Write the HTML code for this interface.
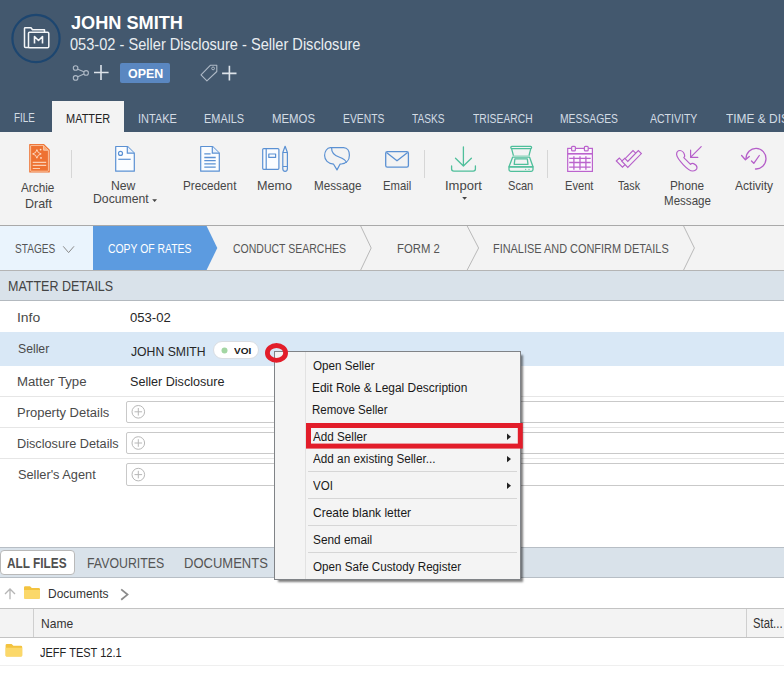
<!DOCTYPE html>
<html><head><meta charset="utf-8">
<style>
*{box-sizing:border-box;margin:0;padding:0}
html,body{width:784px;height:698px;overflow:hidden;background:#fff;font-family:"Liberation Sans",sans-serif;color:#333;position:relative}
.t{position:absolute;line-height:1;white-space:nowrap;transform-origin:0 0}
.b{position:absolute}
svg{position:absolute;left:0;top:0;overflow:visible}
</style></head><body>
<!-- header -->
<div class="b" style="left:0;top:0;width:784px;height:132px;background:#43586e"></div>
<div class="b" style="left:52px;top:101px;width:72px;height:31px;background:#f3f3f3"></div>
<div class="b" style="left:120px;top:63px;width:50px;height:20px;background:#5a87c1;border-radius:2px"></div>
<!-- ribbon -->
<div class="b" style="left:0;top:132px;width:784px;height:93px;background:#f3f3f3"></div>
<div class="b" style="left:0;top:225px;width:784px;height:1px;background:#a9a9a9"></div>
<div class="b" style="left:71px;top:150px;width:1px;height:28px;background:#d6d6d6"></div>
<div class="b" style="left:424px;top:150px;width:1px;height:28px;background:#d6d6d6"></div>
<div class="b" style="left:547px;top:150px;width:1px;height:28px;background:#d6d6d6"></div>
<!-- stages -->
<div class="b" style="left:0;top:226px;width:784px;height:44px;background:#f3f3f3"></div>
<div class="b" style="left:0;top:226px;width:93px;height:44px;background:#eaf4fd"></div>
<div class="b" style="left:0;top:270px;width:784px;height:1px;background:#b4b4b4"></div>
<!-- matter details -->
<div class="b" style="left:0;top:271px;width:784px;height:29px;background:#d9e2ea"></div>
<div class="b" style="left:0;top:300px;width:784px;height:1px;background:#b3b9bf"></div>
<div class="b" style="left:0;top:332px;width:784px;height:34px;background:#d9e8f6"></div>
<div class="b" style="left:0;top:396px;width:784px;height:1px;background:#e6e6e6"></div>
<div class="b" style="left:0;top:427px;width:784px;height:1px;background:#e6e6e6"></div>
<div class="b" style="left:0;top:458px;width:784px;height:1px;background:#e6e6e6"></div>
<div class="b" style="left:126px;top:401px;width:700px;height:22px;border:1px solid #c9c9c9;border-radius:2px;background:#fff"></div>
<div class="b" style="left:126px;top:432px;width:700px;height:22px;border:1px solid #c9c9c9;border-radius:2px;background:#fff"></div>
<div class="b" style="left:126px;top:463px;width:700px;height:23px;border:1px solid #c9c9c9;border-radius:2px;background:#fff"></div>
<div class="b" style="left:213px;top:341px;width:46px;height:18px;border:1px solid #d9dde2;border-radius:9px;background:#fff"></div>
<!-- bottom -->
<div class="b" style="left:0;top:547px;width:784px;height:31px;background:#d9e2ea;border-top:1px solid #b7bec5;border-bottom:1px solid #b7bec5"></div>
<div class="b" style="left:0;top:550px;width:75px;height:25px;background:#fff;border:1px solid #b9b9b9;border-radius:4px"></div>
<div class="b" style="left:0;top:608px;width:784px;height:30px;background:#f3f3f3;border-top:1px solid #c3c3c3;border-bottom:1px solid #c3c3c3"></div>
<div class="b" style="left:33px;top:609px;width:1px;height:28px;background:#cfcfcf"></div>
<div class="b" style="left:746px;top:609px;width:1px;height:28px;background:#cfcfcf"></div>
<div class="b" style="left:0;top:665px;width:784px;height:1px;background:#efefef"></div>

<svg width="784" height="698" viewBox="0 0 784 698">
  <!-- logo -->
  <circle cx="36" cy="38.5" r="23.6" fill="none" stroke="#1d4670" stroke-width="2.2"/>
  <g fill="none" stroke="#f4f6f8" stroke-width="1.5" stroke-linejoin="round">
    <path d="M29,47.5 H25.5 Q24.5,47.5 24.5,46.5 V28.5 Q24.5,27.8 25.3,27.8 H31 L32.5,29.8 H44.5 V32"/>
    <path d="M29.5,32.3 H47.5 Q48.8,32.3 48.8,33.5 V46.5 Q48.8,47.8 47.5,47.8 H29.5 Q28.5,47.8 28.5,46.5 V33.3 Q28.5,32.3 29.5,32.3 Z"/>
    <path d="M34.5,43.5 V36.5 L38.5,40.5 L42.5,36.5 V43.5" stroke-width="1.6"/>
  </g>
  <!-- share -->
  <g fill="none" stroke="#aeb9c6" stroke-width="1.1">
    <circle cx="75.6" cy="68" r="2.3"/><circle cx="75.6" cy="77.9" r="2.3"/><circle cx="86.1" cy="72.9" r="2.3"/>
    <path d="M77.8,69.2 L83.9,71.8 M77.8,76.8 L83.9,74"/>
  </g>
  <g stroke="#dde3ea" stroke-width="1.6">
    <path d="M101,65 V80 M94,72.5 H108.6"/>
    <path d="M229.4,65.8 V80.5 M222.1,73.4 H236.5"/>
  </g>
  <path d="M201,74.9 L210.3,65.3 H216.8 V71.5 L206.9,80.8 Z" fill="none" stroke="#aeb9c6" stroke-width="1.1" stroke-linejoin="round"/>
  <circle cx="213.1" cy="68.4" r="1.4" fill="none" stroke="#aeb9c6" stroke-width="1"/>

  <!-- Archie -->
  <path d="M29.2,144.6 Q29.2,144 29.8,144 H44 L49.8,149.8 V172 Q49.8,172.6 49.2,172.6 H29.8 Q29.2,172.6 29.2,172 Z" fill="#ee7232"/>
  <path d="M30.6,145.8 Q30.6,145.4 31,145.4 H43.4 L48.4,150.4 V170.8 Q48.4,171.2 48,171.2 H31 Q30.6,171.2 30.6,170.8 Z" fill="none" stroke="#fbc9a8" stroke-width="0.9"/>
  <path d="M43.6,145.6 V150.2 H48.2" fill="#f7a878" stroke="#fbd2b6" stroke-width="0.9"/>
  <path d="M36.9,149.6 Q37.5,153.3 41.2,153.9 Q37.5,154.5 36.9,158.2 Q36.3,154.5 32.6,153.9 Q36.3,153.3 36.9,149.6 Z" fill="none" stroke="#fde0cc" stroke-width="0.9"/>
  <circle cx="40.6" cy="149.6" r="0.9" fill="#fde0cc"/><circle cx="41" cy="157.9" r="0.9" fill="#fde0cc"/>
  <path d="M32.7,162.4 H46.2 M32.7,165.4 H46.2 M32.7,168.5 H40" stroke="#fbcfb3" stroke-width="1.2"/>
  <!-- New document -->
  <g fill="none" stroke="#5b91d3" stroke-width="1.2" stroke-linejoin="round">
    <path d="M115.7,146.5 H127.5 L134.3,153.2 V171.2 H115.7 Z" fill="#fbfdff"/>
    <path d="M127.3,146.5 V153.2 H134.3" fill="#eaf2fc"/>
    <circle cx="120.5" cy="153.4" r="2"/>
    <path d="M118.3,159.3 H130.7"/>
  </g>
  <!-- Precedent -->
  <g fill="none" stroke="#5b91d3" stroke-width="1.2" stroke-linejoin="round">
    <path d="M200.7,146.5 H212.5 L219.3,153.2 V171.2 H200.7 Z" fill="#fbfdff"/>
    <path d="M212.3,146.5 V153.2 H219.3" fill="#eaf2fc"/>
    <path d="M204.3,153.9 H210.6 M204.3,157.5 H215.7 M204.3,160.6 H215.7 M204.3,163.8 H215.7 M204.3,167.1 H215.7" stroke-width="1.3"/>
  </g>
  <!-- Memo -->
  <g fill="none" stroke="#5b91d3" stroke-width="1.2" stroke-linejoin="round">
    <rect x="262.7" y="148.6" width="16.2" height="20.7" rx="1" fill="#fbfdff"/>
    <path d="M266.2,148.6 V169.3"/>
    <rect x="268.8" y="154" width="6.8" height="3.4"/>
    <path d="M282.8,152.5 L285.1,146.3 L287.4,152.5 V168.8 Q287.4,171.3 285.1,171.3 Q282.8,171.3 282.8,168.8 Z M282.8,152.5 H287.4 M282.8,166.5 H287.4"/>
  </g>
  <!-- Message -->
  <g fill="none" stroke="#5b91d3" stroke-width="1.2" stroke-linejoin="round">
    <path d="M330.3,147.7 H343.6 C347.5,147.7 349.4,151.2 349.4,155.2 C349.4,159.8 346.4,163.4 341.4,164 L340,164.2 L337,169.9 L333.6,164.2 C328,163.6 324.6,160 324.6,155.6 C324.6,151.2 327.2,147.7 330.3,147.7 Z"/>
    <path d="M331.6,147.8 C331.4,152.5 334,155.3 339,157 C343.5,158.6 346,160.6 346.5,162.8"/>
  </g>
  <!-- Email -->
  <g fill="none" stroke="#5b91d3" stroke-width="1.3" stroke-linejoin="round">
    <rect x="385.7" y="151.6" width="22.7" height="15.6" rx="1.6"/>
    <path d="M386.5,152.4 L397,160.8 L407.6,152.4"/>
  </g>
  <!-- Import -->
  <g fill="none" stroke="#4fbf9b" stroke-width="1.3" stroke-linecap="round" stroke-linejoin="round">
    <path d="M463.4,147 V165.8 M455.5,158.3 L463.4,166 L471.4,158.3"/>
    <path d="M451.6,166 V169 Q451.6,171.1 453.8,171.1 H473.2 Q475.4,171.1 475.4,169 V166"/>
  </g>
  <!-- Scan -->
  <g fill="none" stroke="#4fbf9b" stroke-width="1.3" stroke-linejoin="round">
    <rect x="510.8" y="146.4" width="20.8" height="2.2" rx="1"/>
    <path d="M511.6,148.6 L513.5,155.8 M530.8,148.6 L528.9,155.8"/>
    <path d="M512.6,157.2 H529.6 L533,166.8 H509 Z"/>
    <path d="M514.9,158.8 H527.3 L528,164.3 H514.2 Z"/>
    <path d="M509,166.8 H533 V169.6 Q533,171.3 531.3,171.3 H510.7 Q509,171.3 509,169.6 Z"/>
  </g>
  <path d="M513.5,155.8 H528.9" stroke="#a9dcc9" stroke-width="1"/>
  <circle cx="525.7" cy="169.3" r="0.6" fill="#4fbf9b"/><circle cx="529" cy="169.3" r="0.6" fill="#4fbf9b"/>
  <!-- Event -->
  <g fill="none" stroke="#bb63cd" stroke-width="1.2">
    <rect x="567.7" y="148.4" width="24.7" height="23" fill="#fdf8fe"/>
    <path d="M567.7,153.8 H592.4" stroke-width="1.6"/>
    <rect x="571.6" y="146.3" width="3.8" height="4.6" rx="1" fill="#f3f3f3"/>
    <rect x="584.4" y="146.3" width="3.8" height="4.6" rx="1" fill="#f3f3f3"/>
    <path d="M569.2,158.3 H590.7 M569.2,162.5 H590.7 M569.2,167.1 H590.7 M573.9,156.2 V169.8 M580,156.2 V169.8 M585.9,156.2 V169.8" stroke-width="1.3"/>
  </g>
  <!-- Task -->
  <g fill="#f3f3f3" stroke="#b55ec9" stroke-width="1.1" stroke-linejoin="miter">
    <path d="M616.3,161 L619.3,158.1 L622.5,161.3 L633,150.5 L636,153.4 L622.5,167.2 Z"/>
    <path d="M621.8,161.2 L624.8,158.3 L627.8,161.4 L638.3,150.5 L641.4,153.6 L627.8,167.4 Z"/>
  </g>
  <!-- Phone -->
  <g fill="none" stroke="#b55ec9" stroke-width="1.2" stroke-linejoin="round" stroke-linecap="round">
    <path d="M680,150.5 C678,150.5 676.6,152.2 676.6,154.5 C676.8,157.2 679.4,160.5 683.4,164.8 C687.4,169 690.2,171 692.6,171 C695,171 697,169.4 697,167.8 C697,166 695.4,164.4 693.6,163.6 C692.2,163 691.2,163.6 690.5,164.3 L683.8,157.6 C684.6,156.8 685,156 684.6,155 C684,153 682,150.5 680,150.5 Z"/>
    <path d="M701.2,146.6 L691,156.8 M690.6,150.2 V157.4 H697.8"/>
  </g>
  <!-- Activity -->
  <g fill="none" stroke="#b55ec9" stroke-width="1.3" stroke-linejoin="round" stroke-linecap="round">
    <path d="M755.5,169 A10,10.3 0 1 0 746,158.6"/>
    <path d="M741.6,155.5 L745.4,159.8 L749.3,156.5"/>
    <path d="M751.5,161 L753.8,163.3 L759.3,155.5"/>
  </g>
  <!-- dropdown arrows -->
  <path d="M152.2,199.3 H157 L154.6,202 Z" fill="#444"/>
  <path d="M462.2,197 H467 L464.6,199.8 Z" fill="#444"/>

  <!-- stages -->
  <path d="M93,226 H206.6 L217.3,248 L206.6,270 H93 Z" fill="#5c9be0"/>
  <g fill="none" stroke="#b9b9b9" stroke-width="1">
    <path d="M360.7,226 L371.2,248 L360.7,270"/>
    <path d="M467.2,226 L478.6,248 L467.2,270"/>
    <path d="M683.6,226 L694.4,248 L683.6,270"/>
  </g>
  <path d="M63.2,246.3 L68.6,252.6 L74,246.3" fill="none" stroke="#8a8a8a" stroke-width="1"/>

  <!-- plus circles -->
  <g fill="none" stroke="#b8b8b8" stroke-width="1">
    <circle cx="138.3" cy="411.8" r="6.3"/><path d="M138.3,408 V415.6 M134.5,411.8 H142.1"/>
    <circle cx="138.3" cy="443" r="6.3"/><path d="M138.3,439.2 V446.8 M134.5,443 H142.1"/>
    <circle cx="138.3" cy="474.6" r="6.3"/><path d="M138.3,470.8 V478.4 M134.5,474.6 H142.1"/>
  </g>
  <circle cx="224.5" cy="350.6" r="3" fill="#a3d6a3"/>

  <!-- bottom icons -->
  <path d="M10,599.3 V589.5 M5,594 L10,589 L15,594" fill="none" stroke="#b5b5b5" stroke-width="1.3"/>
  <path d="M24,587.5 Q24,586.2 25.3,586.2 H30 L31.8,588 H38.7 Q40,588 40,589.3 V597.6 Q40,598.8 38.7,598.8 H25.3 Q24,598.8 24,597.6 Z" fill="#f3c33f"/>
  <path d="M24,590 H40 V597.6 Q40,598.8 38.7,598.8 H25.3 Q24,598.8 24,597.6 Z" fill="#fbd86a"/>
  <path d="M121.2,589.4 L127.5,594.6 L121.2,599.8" fill="none" stroke="#8b8b8b" stroke-width="1.8"/>
  <path d="M5.6,645.3 Q5.6,644 6.9,644 H11.6 L13.4,645.8 H20.9 Q22.2,645.8 22.2,647.1 V655.3 Q22.2,656.6 20.9,656.6 H6.9 Q5.6,656.6 5.6,655.3 Z" fill="#f3c33f"/>
  <path d="M5.6,647.8 H22.2 V655.3 Q22.2,656.6 20.9,656.6 H6.9 Q5.6,656.6 5.6,655.3 Z" fill="#fbd86a"/>
</svg>

<!-- menu -->
<div class="b" style="z-index:10;left:274px;top:351px;width:247px;height:229px;background:#f4f4f4;border:1px solid #808387;box-shadow:3px 3px 2px -1px rgba(0,0,0,0.5)"></div>
<div class="b" style="z-index:10;left:305px;top:352px;width:1px;height:227px;background:#e2e2e2"></div>
<div class="b" style="z-index:10;left:308px;top:471px;width:209px;height:1px;background:#d6d6d6"></div>
<div class="b" style="z-index:10;left:308px;top:498px;width:209px;height:1px;background:#d6d6d6"></div>
<div class="b" style="z-index:10;left:308px;top:525px;width:209px;height:1px;background:#d6d6d6"></div>
<div class="b" style="z-index:10;left:308px;top:552px;width:209px;height:1px;background:#d6d6d6"></div>
<svg width="784" height="698" viewBox="0 0 784 698" style="z-index:12">
  <path d="M507,433.6 L511,436.8 L507,440 Z" fill="#222"/>
  <path d="M507,455.9 L511,459.1 L507,462.3 Z" fill="#222"/>
  <path d="M507,482.5 L511,485.7 L507,488.9 Z" fill="#222"/>
  <rect x="308.5" y="425.5" width="211.8" height="20.6" fill="none" stroke="#e21d2a" stroke-width="5"/>
  <ellipse cx="276.5" cy="352.9" rx="9.1" ry="7.4" fill="none" stroke="#e21d2a" stroke-width="4.8"/>
</svg>
<div class="t" style="left:71.23px;top:15.00px;font-size:17.44px;transform:scaleX(1.0411);color:#ffffff;font-weight:bold;">JOHN SMITH</div>
<div class="t" style="left:70.42px;top:37.00px;font-size:15.99px;transform:scaleX(0.9134);color:#e9edf1;">053-02 - Seller Disclosure - Seller Disclosure</div>
<div class="t" style="left:127.60px;top:68.00px;font-size:12.79px;transform:scaleX(0.9697);color:#ffffff;font-weight:bold;">OPEN</div>
<div class="t" style="left:137.51px;top:113.00px;font-size:12.35px;transform:scaleX(0.8914);color:#d3dce5;">INTAKE</div>
<div class="t" style="left:203.72px;top:113.00px;font-size:12.35px;transform:scaleX(0.8872);color:#d3dce5;">EMAILS</div>
<div class="t" style="left:271.79px;top:113.00px;font-size:12.35px;transform:scaleX(0.9225);color:#d3dce5;">MEMOS</div>
<div class="t" style="left:342.77px;top:113.00px;font-size:12.35px;transform:scaleX(0.8376);color:#d3dce5;">EVENTS</div>
<div class="t" style="left:412.00px;top:113.00px;font-size:12.35px;transform:scaleX(0.8223);color:#d3dce5;">TASKS</div>
<div class="t" style="left:473.29px;top:113.00px;font-size:12.35px;transform:scaleX(0.8358);color:#d3dce5;">TRISEARCH</div>
<div class="t" style="left:560.37px;top:113.00px;font-size:12.35px;transform:scaleX(0.8367);color:#d3dce5;">MESSAGES</div>
<div class="t" style="left:650.30px;top:113.00px;font-size:12.35px;transform:scaleX(0.8528);color:#d3dce5;">ACTIVITY</div>
<div class="t" style="left:14.11px;top:112.00px;font-size:12.35px;transform:scaleX(0.7972);color:#d3dce5;">FILE</div>
<div class="t" style="left:65.92px;top:113.00px;font-size:12.35px;transform:scaleX(0.8881);color:#222222;">MATTER</div>
<div class="t" style="left:725.86px;top:113.00px;font-size:12.35px;transform:scaleX(0.9663);color:#d3dce5;">TIME &amp; DIS</div>
<div class="t" style="left:21.40px;top:182.00px;font-size:12.35px;transform:scaleX(0.9545);color:#464646;">Archie</div>
<div class="t" style="left:24.70px;top:198.00px;font-size:12.35px;transform:scaleX(1.0118);color:#464646;">Draft</div>
<div class="t" style="left:110.52px;top:180.00px;font-size:12.35px;transform:scaleX(0.9881);color:#464646;">New</div>
<div class="t" style="left:92.62px;top:193.00px;font-size:12.35px;transform:scaleX(0.9905);color:#464646;">Document</div>
<div class="t" style="left:182.66px;top:180.00px;font-size:12.35px;transform:scaleX(0.9488);color:#464646;">Precedent</div>
<div class="t" style="left:257.49px;top:180.00px;font-size:12.35px;transform:scaleX(1.0213);color:#464646;">Memo</div>
<div class="t" style="left:313.76px;top:180.00px;font-size:12.35px;transform:scaleX(0.9474);color:#464646;">Message</div>
<div class="t" style="left:382.70px;top:180.00px;font-size:12.35px;transform:scaleX(0.9142);color:#464646;">Email</div>
<div class="t" style="left:445.23px;top:180.00px;font-size:12.35px;transform:scaleX(1.0536);color:#464646;">Import</div>
<div class="t" style="left:507.90px;top:180.00px;font-size:12.35px;transform:scaleX(0.8989);color:#464646;">Scan</div>
<div class="t" style="left:564.91px;top:180.00px;font-size:12.35px;transform:scaleX(0.9012);color:#464646;">Event</div>
<div class="t" style="left:617.99px;top:180.00px;font-size:12.35px;transform:scaleX(0.8671);color:#464646;">Task</div>
<div class="t" style="left:669.66px;top:180.00px;font-size:12.35px;transform:scaleX(0.9543);color:#464646;">Phone</div>
<div class="t" style="left:663.87px;top:195.00px;font-size:12.35px;transform:scaleX(0.9371);color:#464646;">Message</div>
<div class="t" style="left:735.30px;top:180.00px;font-size:12.35px;transform:scaleX(0.9744);color:#464646;">Activity</div>
<div class="t" style="left:14.55px;top:243.00px;font-size:12.35px;transform:scaleX(0.8177);color:#555555;">STAGES</div>
<div class="t" style="left:108.18px;top:243.00px;font-size:12.35px;transform:scaleX(0.8436);color:#ffffff;">COPY OF RATES</div>
<div class="t" style="left:232.77px;top:243.00px;font-size:12.35px;transform:scaleX(0.8508);color:#555555;">CONDUCT SEARCHES</div>
<div class="t" style="left:396.99px;top:243.00px;font-size:12.35px;transform:scaleX(0.9171);color:#555555;">FORM 2</div>
<div class="t" style="left:493.43px;top:243.00px;font-size:12.35px;transform:scaleX(0.8844);color:#555555;">FINALISE AND CONFIRM DETAILS</div>
<div class="t" style="left:7.60px;top:279.00px;font-size:14.10px;transform:scaleX(0.8875);color:#444444;">MATTER DETAILS</div>
<div class="t" style="left:17.15px;top:311.00px;font-size:13.37px;transform:scaleX(1.0426);color:#4a4a4a;">Info</div>
<div class="t" style="left:130.48px;top:311.00px;font-size:13.37px;transform:scaleX(0.9814);color:#262626;">053-02</div>
<div class="t" style="left:17.95px;top:342.00px;font-size:13.37px;transform:scaleX(0.9142);color:#4a4a4a;">Seller</div>
<div class="t" style="left:131.32px;top:346.00px;font-size:12.65px;transform:scaleX(0.9663);color:#262626;">JOHN SMITH</div>
<div class="t" style="left:234.35px;top:346.00px;font-size:9.88px;transform:scaleX(1.0118);color:#1a1a1a;font-weight:bold;">VOI</div>
<div class="t" style="left:17.44px;top:375.00px;font-size:13.23px;transform:scaleX(0.9997);color:#4a4a4a;">Matter Type</div>
<div class="t" style="left:130.43px;top:375.00px;font-size:13.66px;transform:scaleX(0.9225);color:#262626;">Seller Disclosure</div>
<div class="t" style="left:17.36px;top:407.00px;font-size:12.65px;transform:scaleX(1.0258);color:#4a4a4a;">Property Details</div>
<div class="t" style="left:17.38px;top:438.00px;font-size:12.21px;transform:scaleX(1.0412);color:#4a4a4a;">Disclosure Details</div>
<div class="t" style="left:17.83px;top:469.00px;font-size:12.94px;transform:scaleX(0.9871);color:#4a4a4a;">Seller's Agent</div>
<div class="t" style="left:312.78px;top:360.00px;font-size:12.65px;transform:scaleX(0.9226);color:#191919;z-index:11;">Open Seller</div>
<div class="t" style="left:312.34px;top:382.00px;font-size:12.65px;transform:scaleX(0.9445);color:#191919;z-index:11;">Edit Role &amp; Legal Description</div>
<div class="t" style="left:312.38px;top:404.00px;font-size:12.65px;transform:scaleX(0.9108);color:#191919;z-index:11;">Remove Seller</div>
<div class="t" style="left:313.30px;top:431.00px;font-size:12.94px;transform:scaleX(0.9034);color:#191919;z-index:11;">Add Seller</div>
<div class="t" style="left:313.30px;top:453.00px;font-size:12.65px;transform:scaleX(0.9274);color:#191919;z-index:11;">Add an existing Seller...</div>
<div class="t" style="left:313.24px;top:480.00px;font-size:12.06px;transform:scaleX(0.9590);color:#191919;z-index:11;">VOI</div>
<div class="t" style="left:312.70px;top:507.00px;font-size:12.35px;transform:scaleX(0.9727);color:#191919;z-index:11;">Create blank letter</div>
<div class="t" style="left:312.77px;top:534.00px;font-size:12.65px;transform:scaleX(0.9364);color:#191919;z-index:11;">Send email</div>
<div class="t" style="left:312.78px;top:560.00px;font-size:13.23px;transform:scaleX(0.8799);color:#191919;z-index:11;">Open Safe Custody Register</div>
<div class="t" style="left:7.10px;top:557.00px;font-size:13.95px;transform:scaleX(0.8485);color:#505050;font-weight:bold;">ALL FILES</div>
<div class="t" style="left:86.51px;top:555.00px;font-size:15.12px;transform:scaleX(0.8163);color:#555555;">FAVOURITES</div>
<div class="t" style="left:183.56px;top:555.00px;font-size:15.12px;transform:scaleX(0.8615);color:#555555;">DOCUMENTS</div>
<div class="t" style="left:47.64px;top:588.00px;font-size:12.50px;transform:scaleX(0.9577);color:#333333;">Documents</div>
<div class="t" style="left:40.64px;top:618.00px;font-size:12.94px;transform:scaleX(0.9313);color:#333333;">Name</div>
<div class="t" style="left:40.13px;top:647.00px;font-size:12.94px;transform:scaleX(0.8509);color:#222222;">JEFF TEST 12.1</div>
<div class="t" style="left:753.49px;top:617.00px;font-size:13.81px;transform:scaleX(0.8193);color:#333333;">Stat...</div>
</body></html>
